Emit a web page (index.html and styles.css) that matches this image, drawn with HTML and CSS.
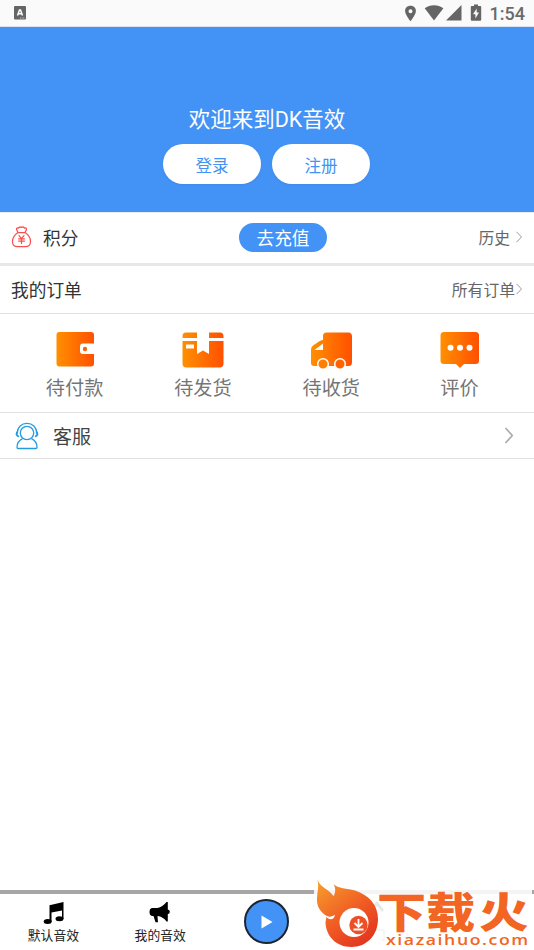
FILE: index.html
```html
<!DOCTYPE html>
<html lang="zh-CN">
<head>
<meta charset="utf-8">
<title>DK音效</title>
<link rel="stylesheet" href="styles.css">
</head>
<body>
<div class="app">
  <div class="status">
    <svg class="status-a" width="12" height="14" viewBox="0 0 12 14"><rect width="12" height="13.5" rx="1" fill="#656565"/><path d="M3.500 9.500L5.500 4h1L8.500 9.500M4.400 7.800h3.200" fill="none" stroke="#fff" stroke-width="1.500"/><path d="M6 12h5" stroke="#ddd" stroke-width=".8" stroke-dasharray="1 .6"/></svg>
    <svg class="status-icons" width="80" height="18" viewBox="0 0 80 18" fill="#656565">
      <path fill-rule="evenodd" d="M6.500 1.800C3.200 1.800 1.100 4 1.100 7c0 3.700 5.400 10.200 5.400 10.200S11.900 10.700 11.900 7c0-3-2.100-5.200-5.400-5.200zm0 3.400a2 2 0 1 1 0 4 2 2 0 0 1 0-4z"/>
      <path d="M20.700 4.200C26 .2 34 .2 39.400 4.200L30 16.400z"/>
      <path d="M57.500 1v15.500H42z"/>
      <path fill-rule="evenodd" d="M70 .5h4V2h2.200q1 0 1 1v12.700q0 1-1 1h-8.400q-1 0-1-1V3q0-1 1-1H70zM72.700 4.500L69 10.200h2.400v4.300L75 8.500h-2.300z"/>
    </svg>
    <span class="clock">1:54</span>
  </div>
  <header class="hero">
    <h1>欢迎来到DK音效</h1>
    <div class="auth"><button>登录</button><button>注册</button></div>
  </header>
  <section class="row points">
    <svg width="22" height="22" viewBox="0 0 22 22" fill="none" stroke="#ff4d4d" stroke-width="1.250" stroke-linejoin="round" stroke-linecap="round"><path d="M7 6.500L5.500 3.200Q5.700 1.300 7.300 2.200 8.500.3 10.500 1.400 12.600.3 13.700 2.200 15.400 1.400 15.500 3.400L14 6.500zM7 6.500C3.500 8.800 1.500 12 1.500 15.500c0 3.500 1.500 5.200 5 5.200h8c3.500 0 5-1.700 5-5.200 0-3.500-2-6.700-5.500-9M8 9.700l2.500 3 2.500-3M7.600 12.800h5.800M7.600 15.100h5.800M10.500 12.800v4.700"/></svg>
    <span class="row-title">积分</span>
    <button class="recharge">去充值</button>
    <a class="more">历史<svg class="gap" width="8" height="12" viewBox="0 0 8 12"><path d="M1.500.8L6.500 6l-5 5.200"/></svg></a>
  </section>
  <section class="row orders-head">
    <span class="orders-title">我的订单</span>
    <a class="more">所有订单<svg width="8" height="12" viewBox="0 0 8 12"><path d="M1.500.8L6.500 6l-5 5.200"/></svg></a>
  </section>
  <section class="orders">
    <div class="order"><svg width="44" height="38" viewBox="0 0 44 38"><defs><linearGradient id="orange"><stop stop-color="#ff9000"/><stop offset="1" stop-color="#ff5000"/></linearGradient></defs><path fill="url(#orange)" d="M6.500 1H38q3 0 3 3v8.500H30q-3 0-3 3V20q0 3 3 3h11v9.500q0 3-3 3H6.500q-3 0-3-3V4q0-3 3-3z"/><circle cx="32" cy="18" r="2.200" fill="#ff6400"/></svg><span>待付款</span></div>
    <div class="order"><svg width="44" height="38" viewBox="0 0 44 38"><path fill="url(#orange)" fill-rule="evenodd" d="M5 1.500h11V7H1.500V5.500Q1.500 1.500 5 1.500zm23 0h11q3.500 0 3.500 4V7H28zM1.500 10H16v13l6-3.500 6 3.500V10h14.500v22.500q0 4-4 4h-33q-4 0-4-4zM5 13.500v4h8v-4z"/></svg><span>待发货</span></div>
    <div class="order"><svg width="44" height="38" viewBox="0 0 44 38"><path fill="url(#orange)" fill-rule="evenodd" d="M17.500 1.500H39q4 0 4 4V31q0 4-3 4H5q-3 0-3-3V18.500Q2 16 4 14.500l6-4Q11.500 9 14 9V5q0-3.500 3.500-3.500zM5.500 19H14v-6.500z"/><circle cx="14" cy="33" r="5.300" fill="#ff7d00" stroke="#fff" stroke-width="1.500"/><circle cx="31" cy="33" r="5.300" fill="#ff6300" stroke="#fff" stroke-width="1.500"/></svg><span>待收货</span></div>
    <div class="order"><svg width="44" height="38" viewBox="0 0 44 38"><path fill="url(#orange)" d="M6 1h31.500q3.500 0 3.500 3.500v25q0 3.500-3.500 3.500H26L22 37 18 33H6q-3.500 0-3.500-3.500v-25Q2.500 1 6 1z"/><g fill="#fff"><circle cx="12.500" cy="16.800" r="3"/><circle cx="22" cy="16.800" r="3"/><circle cx="31.500" cy="16.800" r="3"/></g></svg><span>评价</span></div>
  </section>
  <section class="row service">
    <svg width="24" height="28" viewBox="0 0 24 28" fill="none" stroke="#229be2" stroke-width="1.300"><circle cx="12" cy="11" r="6.700"/><path d="M2.200 11C2.500 5 6.500 1.400 12 1.400S21.500 5 21.800 11M7.500 16.600C3.500 18.500 2 21.500 2 25.300q0 1.200 1.200 1.200h17.600q1.200 0 1.200-1.200c0-3.800-1.500-6.800-5.500-8.700"/><path stroke-width="2" d="M2.200 9.700L1.500 13M21.800 9.700l.7 3.300"/><path stroke-width="1.800" stroke-linecap="round" d="M2 13.500l1.300.7M22 13.500l-1.300.7"/></svg>
    <span class="service-title">客服</span>
    <svg class="big-chevron" width="10" height="17" viewBox="0 0 10 17"><path d="M1.500 1L8.300 8.500 1.500 16"/></svg>
  </section>
  <main class="space"></main>
  <nav class="tabs">
    <div class="tab"><svg width="24" height="24" viewBox="0 0 24 24"><path d="M8.500 4.200L22.500 1v17H21V9.500L10.500 11.500v9.500h-2z"/><ellipse cx="6.700" cy="20.500" rx="4" ry="2.500"/><ellipse cx="18.500" cy="17.700" rx="4" ry="2.500"/></svg><span>默认音效</span></div>
    <div class="tab"><svg width="24" height="24" viewBox="0 0 24 24"><path d="M4 7h5.500Q14.500 6 18.500 1h1.300v7.500q2 .2 2 2.300t-2 2.300v7.300h-1.300Q15 15.700 9.500 15L10 21.300H7.500L5.500 15H4q-2.500-.7-2.500-4T4 7z"/></svg><span>我的音效</span></div>
    <div class="tab"><button class="play" aria-label="播放"><svg width="14" height="16" viewBox="0 0 14 16"><path fill="#fff" d="M1.500 1.500L12.500 8l-11 6.500z"/></svg></button></div>
    <div class="tab"></div><div class="tab"></div>
  </nav>
  <div class="watermark">
    <svg width="218" height="76" viewBox="314 874 218 76">
      <defs><linearGradient id="flame" x2=".7" y2="1"><stop stop-color="#f7a02c"/><stop offset=".6" stop-color="#f05a24"/><stop offset="1" stop-color="#e2371f"/></linearGradient></defs>
      <path d="M314 890h218v4H314z" fill="#f4f4f4"/>
      <path d="M372 906l5-5 7 9-2 2-5-6-4 4z" fill="#e8e8e8"/><path d="M367 930v10M374 930h10v10h-3" fill="none" stroke="#eee"/>
      <path fill="url(#flame)" d="M317.500 880C321 888 329 889 333.500 896 336 892 335.500 888 333.500 884 338 889 347 888 355 890.500 369 895 378 905 378 919 378 935 367 947 351.500 947 336 947 326 936 325.500 922.500L326.500 916C319 911 316.500 905 317 898 317.500 891 319 887 317.500 880z"/>
      <path fill="#fff" d="M325.500 915.500C328 920.500 334 921 335 914.500 332 917 329 917.300 325.500 915.500z"/>
      <circle cx="354" cy="922.500" r="14.500" fill="#fff"/><circle cx="358.500" cy="925" r="9.200" fill="#ed5026"/>
      <path d="M358.500 919v7M354.500 923l4 4 4-4M353.500 929.500h10" fill="none" stroke="#fff" stroke-width="1.800"/>
      <text class="brand" transform="translate(377 928) scale(1.170 1)">下载</text>
      <text class="brand" transform="translate(479 928) scale(1.180 1)">火</text>
      <text class="domain" transform="translate(386 945) scale(1.180 1)" textLength="120.500" lengthAdjust="spacing">xiazaihuo.com</text>
    </svg>
  </div>
</div>
</body>
</html>
```
FILE: styles.css
```css
* { box-sizing: border-box; }
body { margin: 0; background: #fff; font-family: Roboto, "Noto Sans CJK SC", sans-serif; color: #333; }
button { border: 0; padding: 0; font-family: inherit; }
svg { display: block; flex: none; }
.app { position: relative; height: 950px; display: flex; flex-direction: column; overflow: hidden; }
.status { height: 27px; flex: none; display: flex; align-items: center; padding: 0 9px 0 14px; background: #fafafa; border-bottom: 1px solid #dbe4ee; }
.status-icons { margin-left: auto; }
.clock { width: 41px; text-align: right; font-size: 18px; font-weight: 500; color: #6a6a6a; }
.hero { height: 185px; flex: none; background: #4392f5; padding-top: 77px; }
h1 { margin: 0; height: 32px; line-height: 32px; text-align: center; font-size: 21.500px; font-weight: 400; color: #fff; }
.auth { display: flex; justify-content: center; gap: 11px; margin: 8px 2px 0 0; }
.auth button { width: 98px; height: 40px; border-radius: 20px; background: #fff; color: #4392f5; font-size: 16.500px; padding: 1px 0 0 1px; box-shadow: 0 1px 2px #3a7fd355; }
.row { flex: none; display: flex; align-items: center; }
.points { display: grid; grid-template-columns: 32px 196px 88px 1fr; height: 54px; padding: 0 11px 2px; border-top: 1px solid #e5edf5; border-bottom: 3px solid #e8e8e8; }
.row-title, .orders-title { font-size: 17.700px; }
.recharge { width: 88px; height: 29px; border-radius: 15px; background: #4392f5; color: #fff; font-size: 17.700px; }
.more { display: flex; justify-content: flex-end; align-items: center; color: #666; font-size: 15.800px; }
.more svg { fill: none; stroke: #999; stroke-width: 1; }
.more .gap { margin-left: 5px; }
.orders-head { height: 48px; padding: 0 11px 1px; justify-content: space-between; border-bottom: 1px solid #e2e2e2; }
.orders { height: 99px; flex: none; display: grid; grid-template-columns: repeat(4, 128.300px); padding: 17px 0 0 10.500px; border-bottom: 1px solid #e2e2e2; }
.order { display: flex; flex-direction: column; align-items: center; font-size: 19.200px; line-height: 28px; color: #757575; }
.order span { margin-top: 6px; }
.service { height: 46px; padding: 0 20px 0 15px; border-bottom: 1px solid #e2e2e2; }
.service-title { margin-left: 14px; font-size: 19px; color: #444; }
.big-chevron { margin-left: auto; fill: none; stroke: #aaa; stroke-width: 1.600; }
.space { flex: 1; }
.tabs { height: 60px; flex: none; display: grid; grid-template-columns: repeat(5, 1fr); border-top: 4px solid #a6a6a6; }
.tab { display: flex; flex-direction: column; align-items: center; padding-top: 7px; font-size: 12.800px; line-height: 20px; color: #222; }
.tab > span { margin-top: 1px; }
.play { width: 45px; height: 45px; margin-top: -2px; border-radius: 50%; border: 2px solid #1c2530; background: #4392f5; display: flex; align-items: center; justify-content: center; }
.watermark { position: absolute; left: 314px; bottom: 0; width: 218px; height: 76px; background: #fff; }
.brand { font: 900 42px "Noto Sans CJK SC", sans-serif; fill: #f26522; }
.domain { font: 600 15px "Open Sans", sans-serif; fill: #f26522; }
```
